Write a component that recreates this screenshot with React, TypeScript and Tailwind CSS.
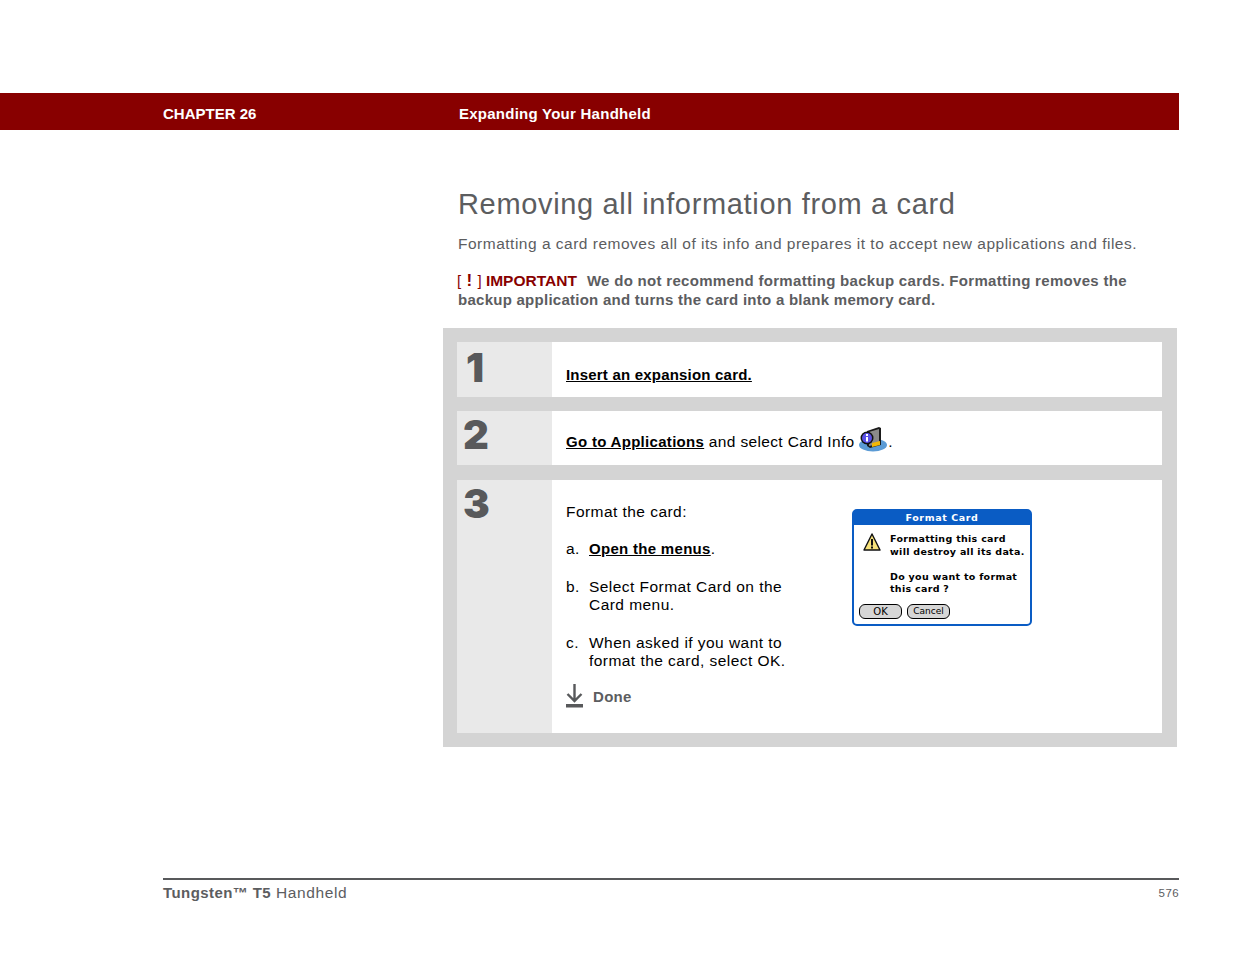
const sans = { fontFamily: '"Liberation Sans", Arial, sans-serif' }

function CardInfoIcon() {
  return (
    <svg width="29" height="26" viewBox="0 0 29 26" className="shrink-0">
      <ellipse cx="14" cy="19" rx="14" ry="6.5" fill="#5b9bd5" />
      <path d="M8 5 L20 1 L22 2 L22 19 L11 22 L8 20 Z" fill="#1a1a1a" />
      <path d="M10 6 L20 3 L20 18 L10 20 Z" fill="#8a8a8a" />
      <path d="M13 17 L21 15 L21 19 L13 21 Z" fill="#f2b705" />
      <circle cx="8" cy="12" r="6.5" fill="#111" />
      <circle cx="8" cy="12" r="5" fill="#5a50e8" />
      <rect x="7" y="11" width="2" height="4.5" fill="#fff" />
      <rect x="7" y="8" width="2" height="2" fill="#fff" />
    </svg>
  )
}

function WarningIcon() {
  return (
    <svg width="18" height="18" viewBox="0 0 18 18" className="shrink-0">
      <path d="M9 1 L17 17 L1 17 Z" fill="#f7e27a" stroke="#111" strokeWidth="1.4" strokeLinejoin="round" />
      <rect x="8" y="6" width="2" height="6.5" fill="#111" />
      <rect x="8" y="13.5" width="2" height="2" fill="#111" />
    </svg>
  )
}

function DoneIcon() {
  return (
    <svg width="17" height="24" viewBox="0 0 17 24" className="shrink-0">
      <path d="M8.5 0 V17 M1.5 10 L8.5 17 L15.5 10" fill="none" stroke="#58595b" strokeWidth="2.4" />
      <rect x="0" y="20" width="17" height="3.5" fill="#58595b" />
    </svg>
  )
}

function FormatDialog() {
  const pixel = { fontFamily: '"DejaVu Sans", sans-serif' }
  return (
    <div className="w-[180px] h-[117px] rounded-[5px] border-2 border-[#0a5cc4] bg-white flex flex-col tracking-normal" style={pixel}>
      <div className="h-[14px] bg-[#0a5cc4] text-white text-[9.5px] font-bold tracking-[0.6px] leading-[14px] text-center">
        Format Card
      </div>
      <div className="flex gap-[9px] pl-[9px] pt-[8px]">
        <WarningIcon />
        <div className="text-[9.5px] font-bold leading-[12.5px] text-black whitespace-nowrap tracking-[0.3px]">
          <div>Formatting this card</div>
          <div>will destroy all its data.</div>
          <div className="mt-[12.5px]">Do you want to format</div>
          <div>this card ?</div>
        </div>
      </div>
      <div className="flex gap-[5px] pl-[5px] mt-[8px]">
        <div className="w-[43px] h-[15px] rounded-[6px] border border-black bg-[#d6d6d6] text-[10px] leading-[13px] text-center text-black">OK</div>
        <div className="w-[43px] h-[15px] rounded-[6px] border border-black bg-[#d6d6d6] text-[9px] leading-[13px] text-center text-black">Cancel</div>
      </div>
    </div>
  )
}

function StepNumber({ n, className }: { n: string; className: string }) {
  return (
    <div className="w-[95px] shrink-0 bg-[#e9e9e9]">
      <div className={`text-[40px] leading-none font-black text-[#58595b] tracking-normal ${className}`} style={{ fontFamily: 'Inter, sans-serif' }}>
        {n}
      </div>
    </div>
  )
}

export default function App() {
  return (
    <div className="bg-white h-[954px] w-[1235px] overflow-hidden pt-[93px]" style={sans}>
      {/* Header band */}
      <div className="w-[1179px] h-[37px] bg-[#880000] flex items-center pl-[163px] pt-[5px] text-white text-[15px] font-bold">
        <div className="w-[296px]">CHAPTER 26</div>
        <div className="tracking-[0.25px]">Expanding Your Handheld</div>
      </div>

      <div className="ml-[458px] w-[700px]">
        <h1 className="mt-[56px] text-[29px] leading-[36px] text-[#5c5d5f] tracking-[0.66px] whitespace-nowrap">
          Removing all information from a card
        </h1>
        <p className="mt-[13px] text-[15.5px] leading-[18px] text-[#5c5d5f] tracking-[0.5px] whitespace-nowrap">
          Formatting a card removes all of its info and prepares it to accept new applications and files.
        </p>
        <div className="mt-[18px] text-[15px] leading-[19px] font-bold text-[#5c5d5f] whitespace-nowrap">
          <div className="tracking-[0.3px]">
            <span className="text-[#880000] font-normal -ml-[1px]">[</span>
            <span className="text-[#880000] text-[17px] mx-[5px]">!</span>
            <span className="text-[#880000] font-normal mr-[4px]">]</span>
            <span className="text-[#880000] text-[15.5px] tracking-normal mr-[10px]">IMPORTANT</span>
            We do not recommend formatting backup cards. Formatting removes the
          </div>
          <div className="tracking-[0.26px]">backup application and turns the card into a blank memory card.</div>
        </div>
      </div>

      {/* Steps */}
      <div className="ml-[443px] mt-[19px] w-[734px] h-[419px] bg-[#d4d4d4] p-[14px] pr-[15px] flex flex-col text-black text-[15.5px] tracking-[0.45px]">
        <div className="flex h-[55px] bg-white">
          <StepNumber n="1" className="pl-[9px] pt-[6px]" />
          <div className="pl-[14px] pt-[23px] leading-[20px] text-[15px] tracking-[0.2px] font-bold underline">Insert an expansion card.</div>
        </div>
        <div className="flex h-[54px] mt-[14px] bg-white">
          <StepNumber n="2" className="pl-[6px] pt-[4px]" />
          <div className="pl-[14px] flex items-end h-[41px] leading-[20px] whitespace-pre">
            <span className="font-bold text-[15px] tracking-[0.3px] underline">Go to Applications</span>
            <span className="tracking-[0.35px]"> and select Card Info </span>
            <CardInfoIcon />
            <span>.</span>
          </div>
        </div>
        <div className="flex h-[253px] mt-[15px] bg-white">
          <StepNumber n="3" className="pl-[6px] pt-[4px]" />
          <div className="pl-[14px] pt-[23px] w-[300px] leading-[18px]">
            <div>Format the card:</div>
            <div className="flex mt-[19px]">
              <span className="w-[23px] shrink-0">a.</span>
              <span><span className="font-bold text-[15px] tracking-[0.3px] underline">Open the menus</span>.</span>
            </div>
            <div className="flex mt-[20px]">
              <span className="w-[23px] shrink-0">b.</span>
              <span className="whitespace-nowrap">Select Format Card on the<br />Card menu.</span>
            </div>
            <div className="flex mt-[20px]">
              <span className="w-[23px] shrink-0">c.</span>
              <span className="whitespace-nowrap">When asked if you want to<br />format the card, select OK.</span>
            </div>
            <div className="flex items-center gap-[10px] mt-[14px] font-bold text-[15px] tracking-[0.3px] text-[#5c5d5f]">
              <DoneIcon />
              <span className="relative top-[1px]">Done</span>
            </div>
          </div>
          <div className="pt-[29px]">
            <FormatDialog />
          </div>
        </div>
      </div>

      {/* Footer */}
      <div className="ml-[163px] mt-[131px] w-[1016px] border-t-2 border-[#58595b] pt-[2px] flex justify-between items-center text-[#5c5d5f]">
        <div className="text-[15.5px] leading-[20px] tracking-[0.6px]">
          <span className="font-bold text-[15px] tracking-[0.42px]">Tungsten™ T5</span> Handheld
        </div>
        <div className="text-[11.5px] leading-[22px] tracking-[0.4px]">576</div>
      </div>
    </div>
  )
}
